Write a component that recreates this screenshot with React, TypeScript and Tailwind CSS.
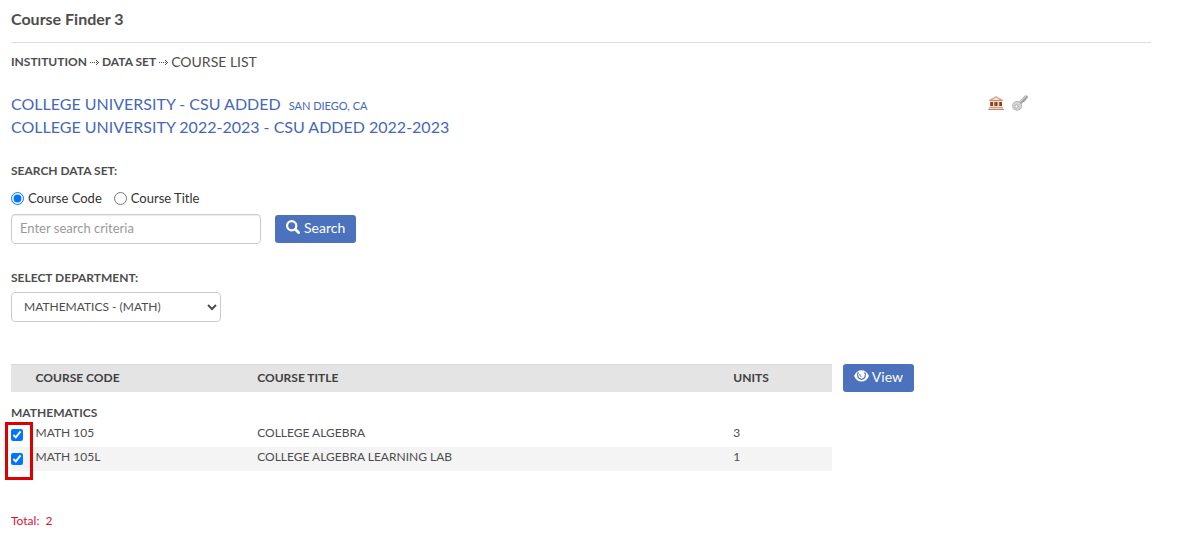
import { useState } from 'react';

const courses = [
  { code: 'MATH 105', title: 'COLLEGE ALGEBRA', units: 3 },
  { code: 'MATH 105L', title: 'COLLEGE ALGEBRA LEARNING LAB', units: 1 },
];

function DottedArrow() {
  return (
    <svg width="9" height="7" viewBox="0 0 9 7" fill="#4a4a4a" shapeRendering="crispEdges" aria-hidden="true">
      <path d="M0 3h1v1H0zM2 3h1v1H2zM4 3h1v1H4zM6 3h1v1H6zM8 3h1v1H8zM7 2h1v1H7zM7 4h1v1H7zM6 1h1v1H6zM6 5h1v1H6z" />
    </svg>
  );
}

function InstitutionIcon() {
  return (
    <svg width="16" height="16" viewBox="0 0 16 16" aria-hidden="true">
      <path d="M8 1 14.500 4.500V6h-13V4.500z" fill="#d9ab94" />
      <path d="M8 2.500 11.500 5h-7z" fill="#f6e6de" />
      <path d="M1.500 5h13v1h-13z" fill="#c48c70" />
      <path d="M2 6h12v6H2z" fill="#f1dcd2" />
      <path d="M2 7h3v4H2zM6.500 7h3v4h-3zM11 7h3v4h-3z" fill="#8c3f17" />
      <path d="M2 7h1v4H2zM6.500 7h1v4h-1zM11 7h1v4h-1z" fill="#a9603c" />
      <path d="M1 12h14v1H1z" fill="#d3a088" />
      <path d="M0 14h16v1H0z" fill="#c4886c" />
      <path d="M1 13h14v1H1z" fill="#ecd0c2" />
    </svg>
  );
}

function KeyIcon() {
  return (
    <svg width="16" height="16" viewBox="0 0 16 16" aria-hidden="true">
      <path d="M6.500 7 13 .6l2.700.2v2.500l-1.300.3-.1 1.700-1.600.2-.1 1.600-1.700.2L8.700 9.800z" fill="#9a9a9a" />
      <path d="M7.200 7.600 13.800 1.200" stroke="#cfcfcf" strokeWidth="1.400" />
      <circle cx="5" cy="10.900" r="4.900" fill="#b0b0b0" />
      <circle cx="4.900" cy="10.700" r="4.300" fill="#d2d2d2" />
      <circle cx="4.400" cy="11.400" r="1.600" fill="#fff" stroke="#a0a0a0" strokeWidth=".8" />
    </svg>
  );
}

function SearchIcon() {
  return (
    <svg width="14" height="14" viewBox="0 0 14 14" fill="none" stroke="#fff" className="mb-[2px]" aria-hidden="true">
      <circle cx="5.700" cy="5.700" r="4.600" strokeWidth="2.200" />
      <path d="m9.200 9.200 3.400 3.400" strokeWidth="2.800" strokeLinecap="round" />
    </svg>
  );
}

function EyeIcon() {
  return (
    <svg width="15" height="12" viewBox="0 0 15 12" className="mb-[2px]" aria-hidden="true">
      <path d="M0 6C1.800 2.300 4.400.3 7.500.3S13.200 2.300 15 6c-1.800 3.700-4.400 5.500-7.500 5.500S1.800 9.700 0 6z" fill="#fff" />
      <path d="M4.400 2.400A4.300 4.300 0 0 0 7.500 9.300a4.300 4.300 0 0 0 3.100-6.900" fill="none" stroke="#4c72be" strokeWidth="1.300" />
      <path d="M5.900 4c-.5 1.600.5 2.500 1.600 2.400" fill="none" stroke="#4c72be" strokeWidth="1" />
    </svg>
  );
}

export default function App() {
  const [searchBy, setSearchBy] = useState('code');
  const [criteria, setCriteria] = useState('');
  const [selected, setSelected] = useState(courses.map((c) => c.code));

  const toggle = (code: string) => {
    setSelected((prev) => (prev.includes(code) ? prev.filter((c) => c !== code) : [...prev, code]));
  };

  return (
    <main className="min-h-screen bg-white pt-[7px] pr-[37px] pb-2 pl-[11px] font-['Lato','Liberation_Sans',sans-serif] text-[13px] leading-5 text-[#4d4d4d]">
      <h1 className="border-b border-[#dddddd] pb-[11px] text-base leading-6 font-bold">Course Finder 3</h1>

      <nav aria-label="Breadcrumb" className="mt-[9px] flex items-center gap-[3px] text-xs leading-5">
        <a href="#institution" className="font-bold">INSTITUTION</a>
        <DottedArrow />
        <a href="#data-set" className="font-bold">DATA SET</a>
        <DottedArrow />
        <span className="text-sm leading-5">COURSE LIST</span>
      </nav>

      <div className="mt-5 flex justify-between">
        <div className="text-base leading-[23px] text-[#4568b8]">
          <div className="flex items-baseline gap-2">
            <span>COLLEGE UNIVERSITY - CSU ADDED</span>
            <span className="text-[11px] leading-4">SAN DIEGO, CA</span>
          </div>
          <div>COLLEGE UNIVERSITY 2022-2023 - CSU ADDED 2022-2023</div>
        </div>
        <div className="mr-[123px] flex gap-2 pt-[3px]">
          <a href="#profile" aria-label="Institution profile" className="h-4"><InstitutionIcon /></a>
          <a href="#legend" aria-label="Key" className="h-4"><KeyIcon /></a>
        </div>
      </div>

      <form onSubmit={(e) => e.preventDefault()}>
        <fieldset className="mt-[23px]">
          <legend className="text-xs leading-5 font-bold">SEARCH DATA SET:</legend>
          <div className="mt-[7px] flex gap-3 text-[#333333]">
            <label className="flex items-center gap-1">
              <input
                type="radio"
                name="searchBy"
                checked={searchBy === 'code'}
                onChange={() => setSearchBy('code')}
                className="h-[13px] w-[13px]"
              />
              Course Code
            </label>
            <label className="flex items-center gap-1">
              <input
                type="radio"
                name="searchBy"
                checked={searchBy === 'title'}
                onChange={() => setSearchBy('title')}
                className="h-[13px] w-[13px]"
              />
              Course Title
            </label>
          </div>
        </fieldset>
        <div className="mt-[6px] flex items-center gap-[14px]">
          <input
            type="text"
            aria-label="Search criteria"
            placeholder="Enter search criteria"
            value={criteria}
            onChange={(e) => setCriteria(e.target.value)}
            className="h-[30px] w-[250px] rounded-[4px] border border-[#cccccc] px-2 pb-[2px] shadow-[inset_0_1px_1px_rgba(0,0,0,0.08)] placeholder:text-[#999999]"
          />
          <button type="submit" className="flex h-7 items-center gap-1 rounded-[3px] bg-[#4c72be] px-[11px] pb-[2px] text-sm text-white">
            <SearchIcon />
            Search
          </button>
        </div>

        <label htmlFor="department" className="mt-6 block text-xs leading-5 font-bold">SELECT DEPARTMENT:</label>
        <select id="department" className="mt-1 block h-[30px] w-[210px] rounded-[4px] border border-[#cccccc] bg-white px-2 pb-[2px] text-xs">
          <option>MATHEMATICS - (MATH)</option>
        </select>
      </form>

      <div className="mt-[42px] flex items-start gap-[11px]">
        <div className="relative w-[72%]">
          <table className="w-full table-fixed text-left text-xs leading-5">
            <colgroup>
              <col className="w-[3%]" />
              <col className="w-[27%]" />
              <col className="w-[58%]" />
              <col className="w-[12%]" />
            </colgroup>
            <thead>
              <tr className="h-7 bg-[#e4e4e4] text-[#404040] shadow-[inset_0_1px_0_#d8d8d8]">
                <td></td>
                <th scope="col">COURSE CODE</th>
                <th scope="col">COURSE TITLE</th>
                <th scope="col">UNITS</th>
              </tr>
            </thead>
            <tbody>
              <tr className="h-[31px] align-bottom">
                <th colSpan={4} scope="colgroup">MATHEMATICS</th>
              </tr>
              {courses.map((course) => (
                <tr key={course.code} className="h-6 align-top even:bg-white odd:bg-[#f4f4f4]">
                  <td className="pt-[6px]">
                    <input
                      type="checkbox"
                      aria-label={course.code}
                      checked={selected.includes(course.code)}
                      onChange={() => toggle(course.code)}
                      className="block h-3 w-3"
                    />
                  </td>
                  <td>{course.code}</td>
                  <td>{course.title}</td>
                  <td>{course.units}</td>
                </tr>
              ))}
            </tbody>
          </table>
          {/* highlight around the selection column */}
          <div className="pointer-events-none absolute top-[58px] -left-[6px] h-[58px] w-7 border-3 border-[#dd0000]" />
        </div>
        <button type="button" className="flex h-7 items-center gap-[3px] rounded-[3px] bg-[#4c72be] px-[11px] pb-[2px] text-sm text-white">
          <EyeIcon />
          View
        </button>
      </div>

      <p className="mt-10 text-xs leading-5 whitespace-pre text-[#d9123a]">Total:  {selected.length}</p>
    </main>
  );
}
